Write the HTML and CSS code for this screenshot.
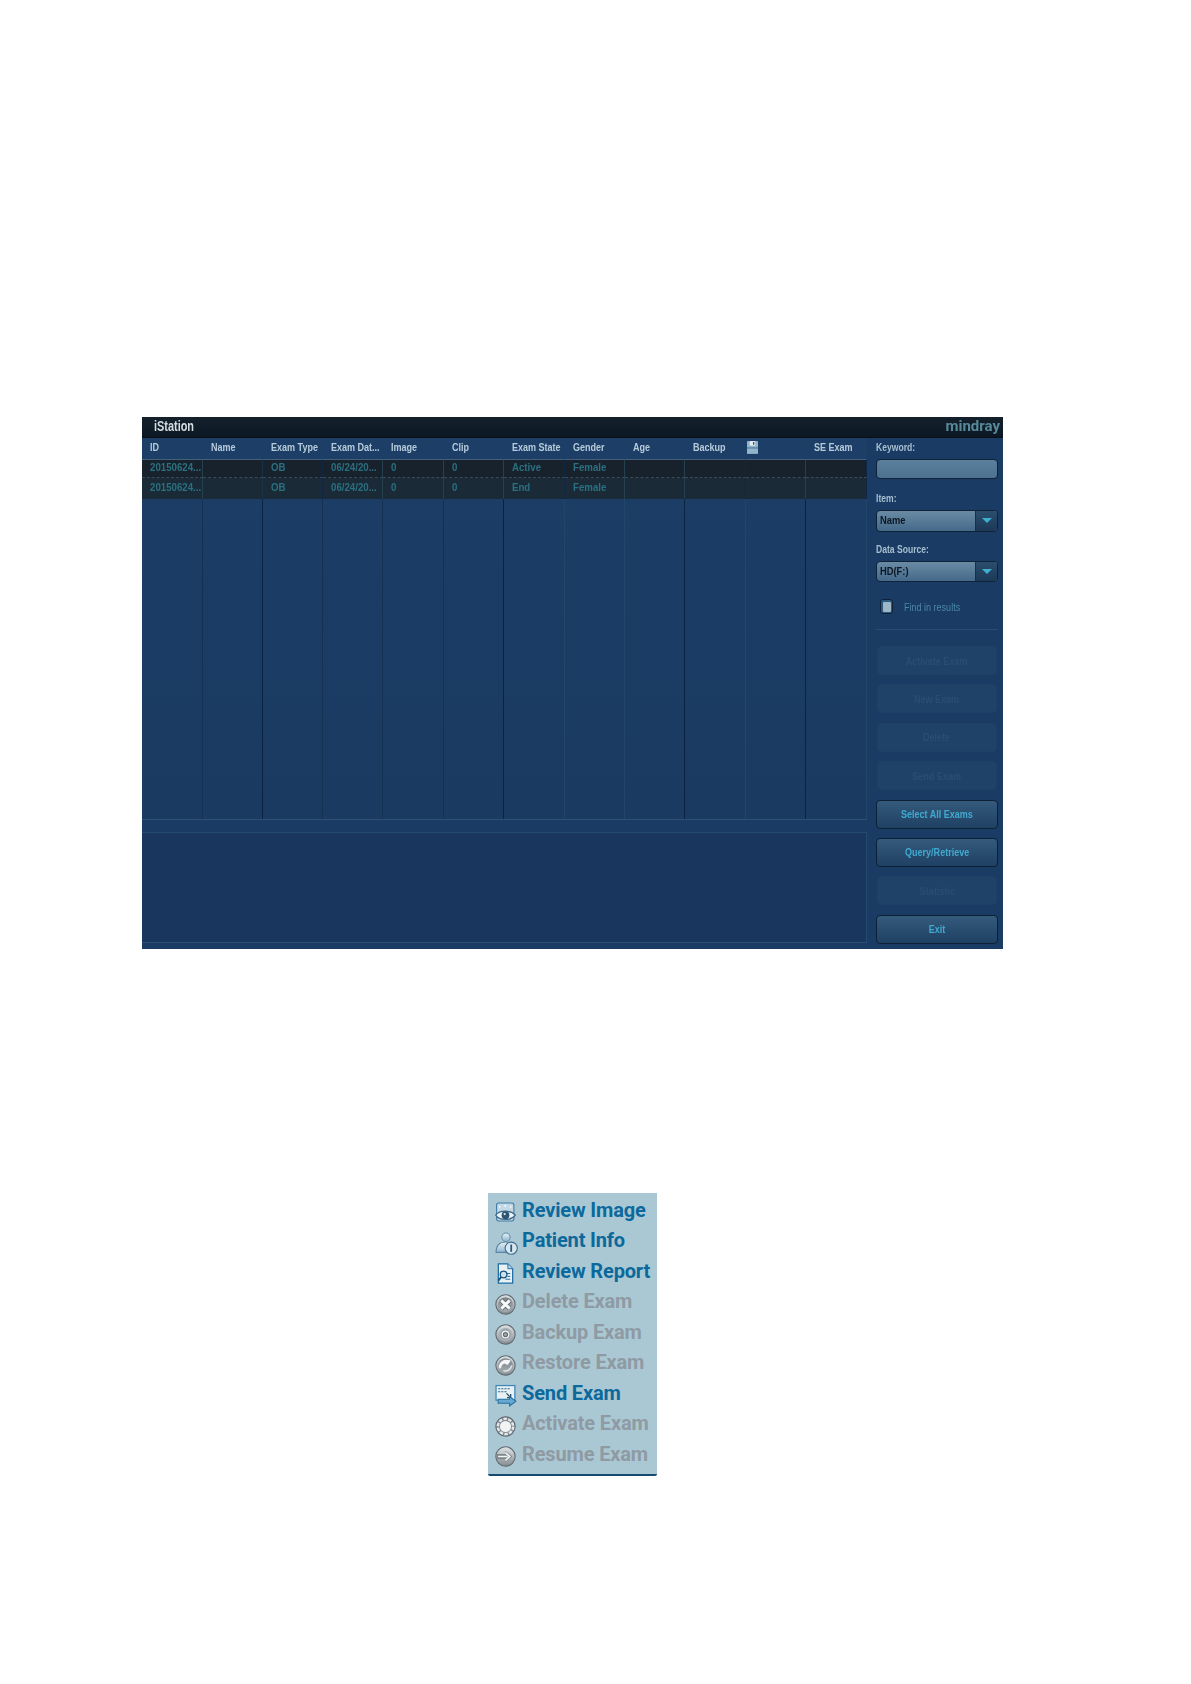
FILE: index.html
```html
<!DOCTYPE html>
<html lang="en">
<head>
<meta charset="utf-8">
<title>iStation</title>
<link rel="stylesheet" href="styles.css">
</head>
<body>
<svg class="defs" aria-hidden="true">
  <defs>
    <linearGradient id="ring" x1="0" y1="0" x2="0" y2="1"><stop offset="0" stop-color="#dfe3e6"/><stop offset="1" stop-color="#848c92"/></linearGradient>
    <linearGradient id="core" x1="0" y1="0" x2="0" y2="1"><stop offset="0" stop-color="#7a8389"/><stop offset="1" stop-color="#a5adb2"/></linearGradient>
    <linearGradient id="blue" x1="0" y1="0" x2="0" y2="1"><stop offset="0" stop-color="#e9f2f6"/><stop offset="1" stop-color="#8db6d0"/></linearGradient>
  </defs>
</svg>
<main class="page">
  <section class="station">
    <header class="titlebar">
      <span class="title"><span class="t">iStation</span></span>
      <span class="logo">mindray</span>
    </header>
    <div class="body">
      <div class="left">
        <div class="table">
          <div class="cell head"><span class="t">ID</span></div><div class="cell head"><span class="t">Name</span></div><div class="cell head"><span class="t">Exam Type</span></div><div class="cell head"><span class="t">Exam Dat...</span></div><div class="cell head"><span class="t">Image</span></div><div class="cell head"><span class="t">Clip</span></div><div class="cell head"><span class="t">Exam State</span></div><div class="cell head"><span class="t">Gender</span></div><div class="cell head"><span class="t">Age</span></div><div class="cell head"><span class="t">Backup</span></div>
          <div class="cell head bare"><svg class="floppy" viewBox="0 0 12 14"><path fill="#8fb4cc" d="M0 0h12v14H0z"/><path fill="#e6eef2" d="M3 0h6v5H3z"/><path fill="#33597c" d="M6.500 1H8v3H6.500z"/><path fill="#3f6d92" d="M0 7h12v1H0z"/></svg></div>
          <div class="cell head"><span class="t">SE Exam</span></div>

          <div class="cell row first"><span class="t">20150624...</span></div><div class="cell row first mid"></div><div class="cell row first dark"><span class="t">OB</span></div><div class="cell row first"><span class="t">06/24/20...</span></div><div class="cell row first"><span class="t">0</span></div><div class="cell row first"><span class="t">0</span></div><div class="cell row first dark"><span class="t">Active</span></div><div class="cell row first"><span class="t">Female</span></div><div class="cell row first"></div><div class="cell row first dark"></div><div class="cell row first"></div><div class="cell row first dark"></div>

          <div class="cell row second"><span class="t">20150624...</span></div><div class="cell row second mid"></div><div class="cell row second dark"><span class="t">OB</span></div><div class="cell row second"><span class="t">06/24/20...</span></div><div class="cell row second"><span class="t">0</span></div><div class="cell row second"><span class="t">0</span></div><div class="cell row second dark"><span class="t">End</span></div><div class="cell row second"><span class="t">Female</span></div><div class="cell row second"></div><div class="cell row second dark"></div><div class="cell row second"></div><div class="cell row second dark"></div>

          <div class="cell fill mid"></div><div class="cell fill dark"></div><div class="cell fill mid"></div><div class="cell fill mid"></div><div class="cell fill mid"></div><div class="cell fill dark"></div><div class="cell fill"></div><div class="cell fill"></div><div class="cell fill dark"></div><div class="cell fill"></div><div class="cell fill dark"></div><div class="cell fill"></div>
        </div>
        <div class="preview"></div>
      </div>
      <aside class="side">
        <div class="label"><span class="t">Keyword:</span></div>
        <div class="input"></div>
        <div class="label gap1"><span class="t">Item:</span></div>
        <div class="select tall"><span class="value"><span class="t">Name</span></span><span class="arrow"></span></div>
        <div class="label gap2"><span class="t">Data Source:</span></div>
        <div class="select"><span class="value"><span class="t">HD(F:)</span></span><span class="arrow"></span></div>
        <div class="check"><span class="box"><span class="tick"></span></span><span class="t">Find in results</span></div>
        <div class="divider"></div>
        <div class="buttons">
          <button class="btn off"><span class="t">Activate Exam</span></button>
          <button class="btn off"><span class="t">New Exam</span></button>
          <button class="btn off"><span class="t">Delete</span></button>
          <button class="btn off"><span class="t">Send Exam</span></button>
          <button class="btn"><span class="t">Select All Exams</span></button>
          <button class="btn"><span class="t">Query/Retrieve</span></button>
          <button class="btn off"><span class="t">Statistic</span></button>
          <button class="btn"><span class="t">Exit</span></button>
        </div>
      </aside>
    </div>
  </section>

  <nav class="menu">
    <div class="item">
      <svg class="ico" viewBox="0 0 20 20"><rect x="1.500" y="1" width="16.500" height="17" rx="2" fill="#c4d9e6" stroke="#3e7ba6"/><path d="M4 4l1 1.200M9.700 2.700v2M15.500 4l-1 1.200" stroke="#f4f8fa" stroke-width="1.400" fill="none"/><path d="M.7 12.500C4 7.500 15.500 7.500 19.300 12.500 15.500 18 4 18 .7 12.500z" fill="#eef4f7" stroke="#3f6a88" stroke-width="1.200"/><circle cx="10" cy="12.500" r="3.700" fill="#2c5673"/><circle cx="9.200" cy="11.500" r="1.100" fill="#dfeaf0"/></svg>
      <span>Review Image</span>
    </div>
    <div class="item">
      <svg class="ico big" viewBox="0 0 22 22"><circle cx="10.500" cy="5" r="4" fill="url(#blue)" stroke="#6a8fa9"/><path d="M1 19.500c0-7.500 4-10 9-10s9 2.500 9 10z" fill="url(#blue)" stroke="#5e85a3"/><circle cx="15.500" cy="15.500" r="5.800" fill="#d9e7ee" stroke="#406f91" stroke-width="1.100"/><path d="M15.500 12v7" stroke="#1f5c86" stroke-width="1.700"/></svg>
      <span>Patient Info</span>
    </div>
    <div class="item">
      <svg class="ico" viewBox="0 0 20 22"><path d="M2.500 1h10l5 5v15h-15z" fill="#e8f1f5" stroke="#1f6ca3" stroke-width="1.300"/><path d="M12.500 1v5h5" fill="#b9d4e4" stroke="#1f6ca3"/><path d="M11 11h4M12 14h3M10 17h5" stroke="#1f6ca3"/><circle cx="8" cy="12" r="3.500" fill="#cfe2ec" stroke="#17567f" stroke-width="1.400"/><path d="M5.500 14.500L2.500 18.500" stroke="#17567f" stroke-width="2"/></svg>
      <span>Review Report</span>
    </div>
    <div class="item off">
      <svg class="ico" viewBox="0 0 20 20"><circle cx="10" cy="10" r="9.200" fill="url(#ring)" stroke="#5f676d"/><circle cx="10" cy="10" r="7" fill="url(#core)"/><path d="M6 6l8 8M14 6l-8 8" stroke="#4f575d" stroke-width="4.200"/><path d="M6 6l8 8M14 6l-8 8" stroke="#f6f8f9" stroke-width="3"/></svg>
      <span>Delete Exam</span>
    </div>
    <div class="item off">
      <svg class="ico" viewBox="0 0 20 20"><circle cx="10" cy="10" r="9.200" fill="url(#ring)" stroke="#5f676d"/><circle cx="10" cy="10" r="6.500" fill="#aab2b7"/><circle cx="10" cy="10" r="4.300" fill="#eef1f2" stroke="#8a9298"/><circle cx="10" cy="10" r="2" fill="#9aa3a8" stroke="#646c71"/></svg>
      <span>Backup Exam</span>
    </div>
    <div class="item off">
      <svg class="ico" viewBox="0 0 20 20"><circle cx="10" cy="10" r="9.200" fill="url(#ring)" stroke="#5f676d"/><circle cx="10" cy="10" r="7" fill="url(#core)"/><path d="M3.500 11.500c.5-4.500 3.500-7 7.500-7 1.500 0 3 .3 4 1l-3 4-3-1.500c-2 .8-3 2-3 4l-1.500 1z" fill="#f4f6f7"/><path d="M8 15c3.500 1 7-1.200 8-5" stroke="#dce2e5" stroke-width="1.500" fill="none"/></svg>
      <span>Restore Exam</span>
    </div>
    <div class="item">
      <svg class="ico big" viewBox="0 0 22 22"><rect x="1" y="1.500" width="18" height="14" fill="#e6f0f5" stroke="#3f86b5" stroke-width="1.200"/><path d="M3 4.500h2M6 4.500h2M9 4.500h2M12 4.500h2M3 7.500h2M6 7.500h2M9 7.500h2" stroke="#2d5f80"/><path d="M11 9l4 4M15 9.500V13h-3.500" stroke="#23475f" stroke-width="1.200" fill="none"/><path d="M3 14.500h11V12l6 4.500-6 4.500v-2.500H3z" fill="#68a9d3" stroke="#26709f"/></svg>
      <span>Send Exam</span>
    </div>
    <div class="item off">
      <svg class="ico" viewBox="0 0 20 20"><circle cx="10" cy="10" r="9.200" fill="#7f878d" stroke="#5f676d"/><circle cx="10" cy="10" r="5.300" fill="#f1f4f5"/><circle cx="10" cy="10" r="7.300" fill="none" stroke="#e2e7e9" stroke-width="2.400" stroke-dasharray="3.300 1.300"/></svg>
      <span>Activate Exam</span>
    </div>
    <div class="item off">
      <svg class="ico" viewBox="0 0 20 20"><circle cx="10" cy="10" r="9.200" fill="url(#ring)" stroke="#5f676d"/><path d="M1.500 7.500h8.500V4.500L16.500 10 10 15.500v-3H1.500z" fill="#7f878d"/><path d="M3 10h9M10 6.300l4 3.700-4 3.700" stroke="#f4f6f7" stroke-width="1.600" fill="none"/></svg>
      <span>Resume Exam</span>
    </div>
  </nav>
</main>
</body>
</html>
```

FILE: styles.css
```css
* { box-sizing: border-box; }
html, body { margin: 0; padding: 0; background: #fff; }
body { height: 1684px; overflow: hidden; }
.defs { position: absolute; width: 0; height: 0; }
.page { padding-top: 417px; display: flex; flex-direction: column; align-items: flex-start; }

.t { display: inline-block; transform: scaleX(0.82); transform-origin: 0 50%; white-space: nowrap; }

.station {
  margin-left: 142px; width: 861px; height: 532px;
  display: flex; flex-direction: column;
  background: #1a3b63;
  font-family: "Liberation Sans", sans-serif;
  filter: blur(0.4px);
}
.titlebar {
  height: 21px; flex: none;
  display: flex; justify-content: space-between; align-items: center;
  padding: 0 3px 2px 12px;
  background: linear-gradient(#14212d, #0c1722);
  border-bottom: 1px solid #0a1017;
}
.title { color: #d4dde2; font-size: 14px; font-weight: 700; }
.title .t { transform: scaleX(0.78); }
.logo { color: #56899a; font: 700 15px "Roboto", sans-serif; }
.body { flex: 1; display: flex; min-height: 0; }
.left { width: 725px; flex: none; display: flex; flex-direction: column; }

.table {
  height: 382px; flex: none;
  display: grid;
  grid-template-columns: 61px 60px 60px 60px 61px 60px 61px 60px 60px 61px 60px 61px;
  grid-template-rows: 21px 19px 21px 1fr;
  border-bottom: 1px solid #2c5175;
}
.cell { padding-left: 8px; font-size: 11px; white-space: nowrap; border-right: 1px solid #214669; }
.head { color: #b6cbda; font-weight: 700; line-height: 18px; border-right: 0; background: #1c3e67; }
.head.bare { padding-left: 1px; }
.row { background: #1a2a36; color: #2a7080; font-weight: 700; border-right-color: #25404f; }
.row .t { transform: scaleX(0.88); }
.first { background: #18222c; border-top: 1px solid #44607a; border-bottom: 1px dashed #3a4a58; line-height: 14px; }
.second { line-height: 18px; }
.row.dark { border-right-color: #0f2744; }
.row.mid { border-right-color: #17324a; }
.fill { background: linear-gradient(#1b3d66, #1a3a61); }
.fill.mid { border-right-color: #143052; }
.fill.dark { border-right-color: #0c2340; }
.floppy { width: 11px; height: 13px; display: block; margin-top: 3px; }

.preview { height: 111px; margin-top: 12px; border-top: 1px solid #254a72; border-right: 1px solid #25486e; border-bottom: 1px solid #2b5078; background: #19375e; }

.side { flex: 1; padding: 0 5px 0 9px; display: flex; flex-direction: column; }
.label { color: #a6bfd0; font-size: 11px; font-weight: 700; line-height: 13px; padding-top: 2px; margin-top: 1px; }
.label .t { transform: scaleX(0.78); }
.gap1 { margin-top: 11px; }
.gap2 { margin-top: 9px; }
.input { height: 20px; margin-top: 5px; border: 1px solid #0f2237; border-radius: 4px; background: linear-gradient(#5b7f9c, #4c7290); }
.select { height: 21px; margin-top: 5px; display: flex; border: 1px solid #0f2237; border-radius: 4px; overflow: hidden; background: linear-gradient(#6a8ba3, #44698a); }
.select.tall { height: 22px; }
.value { flex: 1; padding-left: 3px; font-size: 11px; font-weight: 700; line-height: 18px; color: #0c1722; }
.value .t { transform: scaleX(0.85); }
.arrow { width: 22px; position: relative; background: linear-gradient(#2c4e6e, #1c3957); border-left: 1px solid #16304d; }
.arrow::after { content: ""; position: absolute; left: 6px; top: 7px; border: 5px solid transparent; border-bottom: 0; border-top: 5px solid #3fb0d0; }
.check { display: flex; align-items: center; gap: 11px; margin-top: 17px; margin-left: 4px; height: 15px; color: #4c86a6; font-size: 11px; }
.check .t { transform: scaleX(0.82); }
.box { width: 13px; height: 15px; border: 1px solid #0f2237; border-radius: 3px; background: #2a5a80; display: flex; align-items: center; justify-content: center; }
.tick { width: 8px; height: 10px; border-radius: 1px; background: #9db7c8; }
.divider { height: 1px; margin-top: 15px; background: #274d74; }
.buttons { display: flex; flex-direction: column; gap: 9.400px; margin-top: 16px; }
.btn {
  display: block; width: 122px; height: 29px; padding: 0;
  font: 700 11px "Liberation Sans", sans-serif;
  color: #41a9d0;
  border: 1px solid #0e2036; border-radius: 4px;
  background: linear-gradient(#345a7c, #1f4163);
}
.btn .t { transform-origin: 50% 50%; }
.btn.off {
  color: #2b4d75; border-color: #1e3f66;
  background: #1f4268;
  width: 120px; margin-left: 1px;
}

.menu {
  margin: 244px 0 0 488px; width: 169px; height: 283px;
  padding: 1.500px 0 0 7px;
  display: flex; flex-direction: column;
  background: #aac8d4;
  border-bottom: 2px solid #174a70;
  border-bottom-left-radius: 2px; border-bottom-right-radius: 2px;
}
.item {
  height: 30.500px; display: flex; align-items: center; gap: 6px;
  font: 700 20px "Roboto", sans-serif; letter-spacing: -0.15px;
  color: #0c699c; white-space: nowrap;
}
.item.off { color: #8f9aa3; }
.ico { width: 21px; height: 21px; flex: none; margin-top: 6px; }
.ico.big { width: 23px; height: 23px; margin-right: -2px; }
```
